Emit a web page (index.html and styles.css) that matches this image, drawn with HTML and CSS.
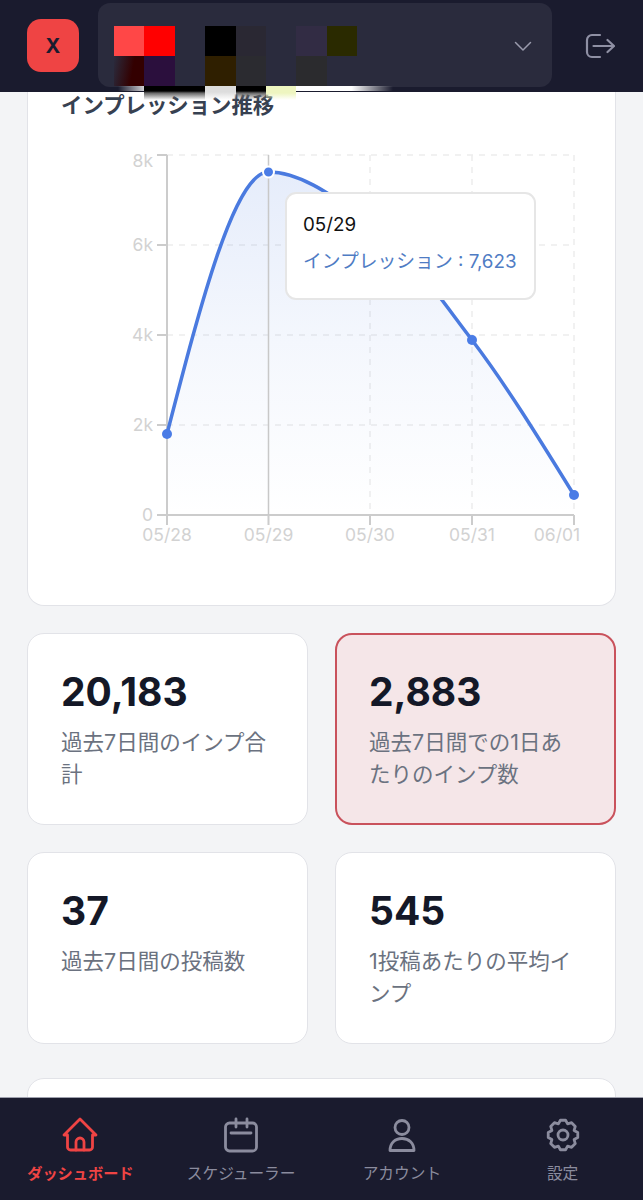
FILE: index.html
```html
<!DOCTYPE html>
<html lang="ja">
<head>
  <meta charset="UTF-8" />
  <title>ダッシュボード</title>
  <link rel="stylesheet" href="styles.css">
</head>
<body>

  <header class="top-bar">
    <div class="logo">X</div>
    <div class="account-select">
      <div class="select-glow"></div>
      <div class="mosaic">
        <i class="m1"></i><i class="m2"></i><i></i><i class="m3"></i><i class="m4"></i><i></i><i class="m5"></i><i class="m6"></i>
        <i class="m7"></i><i class="m8"></i><i></i><i class="m9"></i><i class="m10"></i><i></i><i class="m11"></i><i></i>
        <i></i><i class="s-black"></i><i class="s-black"></i><i class="s-grey"></i><i class="s-black"></i><i class="s-yellow"></i><i></i><i></i>
      </div>
      <svg class="chevron" viewBox="0 0 24 24" width="24" height="24" fill="none" stroke="#9a9bad" stroke-width="1.5" stroke-linecap="round" stroke-linejoin="round"><path d="M4.500 8.500L12 16l7.500-7.500"/></svg>
    </div>
    <svg class="logout" viewBox="0 0 30 28" width="30" height="28" fill="none" stroke="#8f90a4" stroke-width="2.2" stroke-linecap="round" stroke-linejoin="round">
      <path d="M15 3H7a5 5 0 0 0-5 5v12a5 5 0 0 0 5 5h8"/>
      <path d="M8.500 14H29M22.500 8l6.500 6-6.500 6"/>
    </svg>
  </header>

  <main class="content">
    <section class="card chart-card">
      <h3>インプレッション推移</h3>
      <div class="chart-wrap">
        <svg class="chart" viewBox="28 118 587 440" width="587" height="440">
          <defs>
            <linearGradient id="areaFill" x1="0" y1="0" x2="0" y2="1">
              <stop offset="0" stop-color="#4a7be0" stop-opacity="0.14"/>
              <stop offset="0.5" stop-color="#4a7be0" stop-opacity="0.06"/>
              <stop offset="1" stop-color="#4a7be0" stop-opacity="0"/>
            </linearGradient>
          </defs>
          <g stroke="#ededed" stroke-width="1.5" stroke-dasharray="6 6" fill="none">
            <path d="M167 155H574M167 245H574M167 335H574M167 425H574"/>
            <path d="M370 155V515M472 155V515M574 155V515"/>
          </g>
          <path fill="url(#areaFill)" d="M167 434C200.800 303 234.700 172 268.500 172C302.300 172 336 198.600 370 222C404 245.400 438 295.300 472 340C506 384.700 540 440 574 495V515H167Z"/>
          <g stroke="#cccccc" stroke-width="2" fill="none">
            <path d="M167 155V515H574"/>
            <path d="M157 155H167M157 245H167M157 335H167M157 425H167M157 515H167"/>
            <path d="M167 515V525M268.500 515V525M370 515V525M472 515V525M574 515V525"/>
          </g>
          <path d="M268.500 155V515" stroke="#c8c8c8" stroke-width="1.500" fill="none"/>
          <path fill="none" stroke="#4a7adf" stroke-width="3.500" d="M167 434C200.800 303 234.700 172 268.500 172C302.300 172 336 198.600 370 222C404 245.400 438 295.300 472 340C506 384.700 540 440 574 495"/>
          <g fill="#4a7ce6">
            <circle cx="167" cy="434" r="5"/>
            <circle cx="472" cy="340" r="5"/>
            <circle cx="574" cy="495" r="5"/>
            <circle cx="268.500" cy="172" r="5.500" stroke="#fff" stroke-width="2"/>
          </g>
          <g class="axis-y" text-anchor="end">
            <text x="153" y="167">8k</text>
            <text x="153" y="251">6k</text>
            <text x="153" y="341">4k</text>
            <text x="153" y="431">2k</text>
            <text x="153" y="521">0</text>
          </g>
          <g class="axis-x" text-anchor="middle">
            <text x="167" y="541">05/28</text>
            <text x="268.500" y="541">05/29</text>
            <text x="370" y="541">05/30</text>
            <text x="472" y="541">05/31</text>
            <text x="557" y="541">06/01</text>
          </g>
        </svg>
        <div class="tooltip">
          <div class="tooltip-date">05/29</div>
          <div class="tooltip-value">インプレッション : 7,623</div>
        </div>
      </div>
    </section>

    <section class="stats">
      <div class="card stat">
        <div class="stat-value">20,183</div>
        <div class="stat-label">過去7日間のインプ合計</div>
      </div>
      <div class="card stat stat-alert">
        <div class="stat-value">2,883</div>
        <div class="stat-label">過去7日間での1日あたりのインプ数</div>
      </div>
      <div class="card stat">
        <div class="stat-value">37</div>
        <div class="stat-label">過去7日間の投稿数</div>
      </div>
      <div class="card stat">
        <div class="stat-value">545</div>
        <div class="stat-label">1投稿あたりの平均インプ</div>
      </div>
    </section>

    <section class="card next-card"></section>
  </main>

  <nav class="bottom-nav">
    <a class="nav-item active">
      <svg viewBox="0 0 36 36" width="36" height="36" fill="none" stroke="currentColor" stroke-width="2.800" stroke-linecap="round" stroke-linejoin="round">
        <path d="M18 2L2 18h3.500v12a3 3 0 0 0 3 3h19a3 3 0 0 0 3-3V18H34z"/>
        <path d="M14 33v-8a4 4 0 0 1 8 0v8"/>
      </svg>
      <span>ダッシュボード</span>
    </a>
    <a class="nav-item">
      <svg viewBox="0 0 36 36" width="36" height="36" fill="none" stroke="currentColor" stroke-width="2.800" stroke-linecap="round" stroke-linejoin="round">
        <rect x="2.500" y="6" width="31" height="28" rx="4"/>
        <path d="M13 2v8M24 2v8M8 16h20"/>
      </svg>
      <span>スケジューラー</span>
    </a>
    <a class="nav-item">
      <svg viewBox="0 0 36 36" width="36" height="36" fill="none" stroke="currentColor" stroke-width="2.800" stroke-linecap="round" stroke-linejoin="round">
        <circle cx="18" cy="10.500" r="7"/>
        <path d="M6 33.500C6 26 11 21.500 18 21.500S30 26 30 33.500z"/>
      </svg>
      <span>アカウント</span>
    </a>
    <a class="nav-item">
      <svg viewBox="0 0 36 36" width="36" height="36" fill="none" stroke="currentColor" stroke-width="2.800" stroke-linecap="round" stroke-linejoin="round">
        <path d="M15.400 3.230H20.600L22.600 6.900L26.600 5.710L30.290 9.400L29.090 13.400L32.770 15.400V20.600L29.090 22.600L30.290 26.600L26.600 30.290L22.600 29.090L20.600 32.770H15.400L13.400 29.090L9.400 30.290L5.710 26.600L6.910 22.600L3.230 20.600V15.400L6.910 13.400L5.710 9.400L9.400 5.710L13.400 6.910z"/>
        <circle cx="18" cy="18" r="5"/>
      </svg>
      <span>設定</span>
    </a>
  </nav>

</body>
</html>
```

FILE: styles.css
```css
* {
  box-sizing: border-box;
}
body {
  margin: 0;
  height: 1200px;
  display: flex;
  flex-direction: column;
  overflow: hidden;
  font-family: Inter, 'Noto Sans CJK JP', sans-serif;
  background: #f3f4f6;
  color: #141827;
}

/* header */
.top-bar {
  position: relative;
  z-index: 2;
  flex: 0 0 92px;
  display: flex;
  align-items: center;
  padding: 0 28px 0 27px;
  background: #1a1b2e;
}
.logo {
  flex: 0 0 52px;
  height: 53px;
  margin-top: -1px;
  display: flex;
  align-items: center;
  justify-content: center;
  border-radius: 14px;
  background: #ef4444;
  color: #1a1b2e;
  font-size: 20px;
  font-weight: 700;
}
.account-select {
  position: relative;
  flex: 0 0 454px;
  height: 84px;
  margin: -2px 0 0 19px;
  display: flex;
  align-items: center;
  justify-content: flex-end;
  padding: 1px 17px 0 0;
  border-radius: 12px;
  background: #2a2b3d;
}
.mosaic {
  position: absolute;
  left: 16px;
  top: 23px;
  display: grid;
  grid-template-columns: repeat(8, 30.4px);
  grid-template-rows: 30px 30px 14px;
}
.m1 { background: #ff4747; }
.m2 { background: #ff0000; }
.m3 { background: #000; }
.m4 { background: #2a2833; }
.m5 { background: #322c44; }
.m6 { background: #2a2a00; }
.m7 { background: linear-gradient(100deg, #2a2b3d, #300 60%); }
.m8 { background: #2b0f3d; }
.m9 { background: #2f1f00; }
.m10 { background: #2b2b30; }
.m11 { background: #2b2b2e; }
.s-black { background: linear-gradient(#000 5px, #666 7px, transparent); }
.s-grey { background: linear-gradient(#ddd, #ddd 6px, transparent); }
.s-yellow { background: linear-gradient(#eef5c0, #eef5c0 7px, transparent); }
.select-glow {
  position: absolute;
  left: 20px;
  top: 83px;
  width: 275px;
  height: 5px;
  background: linear-gradient(90deg, transparent, #fff 12%, #fff 85%, transparent);
}
.logout {
  margin-left: 33px;
}

/* main column */
.content {
  flex: 1;
  min-height: 0;
  overflow: hidden;
  display: flex;
  flex-direction: column;
  gap: 27px;
  padding: 0 27px;
}
.card {
  background: #fff;
  border: 1px solid #e2e3e8;
  border-radius: 17px;
}
.chart-card {
  flex: 0 0 514px;
  padding: 0 0 0 33px;
  border-top: none;
  border-top-left-radius: 0;
  border-top-right-radius: 0;
}
h3 {
  margin: 0;
  font-size: 21.4px;
  line-height: 26px;
  font-weight: 600;
  color: #374151;
}
.chart-wrap {
  position: relative;
  margin-left: -33px;
}
.chart {
  display: block;
}
.chart text {
  font-size: 17.5px;
  fill: #d2d2d2;
}
.tooltip {
  position: absolute;
  left: 257px;
  top: 74px;
  width: 251px;
  height: 108px;
  padding: 18px 16px;
  background: #fff;
  border: 2px solid #e6e6e6;
  border-radius: 11px;
  font-size: 18.8px;
  line-height: 26px;
}
.tooltip-date {
  color: #111;
}
.tooltip-value {
  margin-top: 11px;
  color: #4f7cc4;
  white-space: nowrap;
}

/* stat cards */
.stats {
  display: grid;
  grid-template-columns: 1fr 1fr;
  grid-auto-rows: 192px;
  gap: 27px;
}
.stat {
  padding: 33px 33px 0;
}
.stat-value {
  font-size: 39px;
  line-height: 50px;
  font-weight: 700;
  color: #141827;
}
.stat-label {
  margin-top: 9px;
  font-size: 21.5px;
  line-height: 32px;
  color: #6b7280;
}
.stat-alert {
  background: #f5e6e8;
  border: 2px solid #c9525c;
  padding: 32px 32px 0;
}
.next-card {
  flex: 0 0 120px;
  margin-top: 7px;
}

/* bottom nav */
.bottom-nav {
  flex: 0 0 103px;
  display: grid;
  grid-template-columns: repeat(4, 1fr);
  padding-top: 19px;
  background: #1a1b2e;
  border-top: 1px solid #9ea0ad;
}
.nav-item {
  display: flex;
  flex-direction: column;
  align-items: center;
  gap: 10px;
  color: #8b8c9e;
  font-size: 15.7px;
  line-height: 22px;
}
.nav-item svg {
  display: block;
}
.nav-item.active {
  color: #ef4444;
  font-size: 15.2px;
  font-weight: 700;
}
```
